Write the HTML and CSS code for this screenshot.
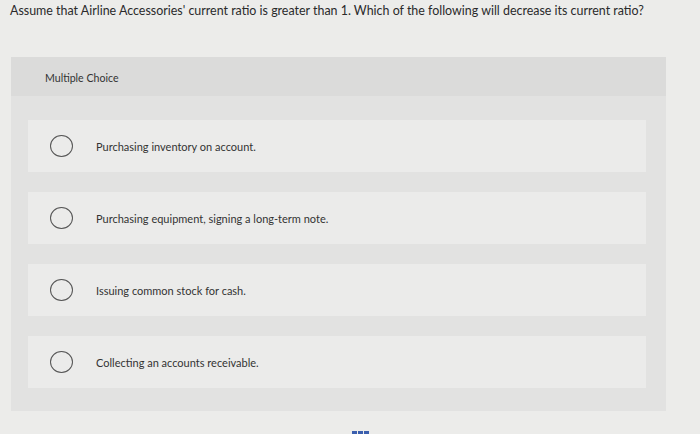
FILE: index.html
```html
<!DOCTYPE html>
<html>
<head>
<meta charset="utf-8">
<link rel="stylesheet" href="styles.css">
</head>
<body>
<div class="page">
  <p class="question">Assume that Airline Accessories' current ratio is greater than 1. Which of the following will decrease its current ratio?</p>
  <div class="panel">
    <div class="panel-head">Multiple Choice</div>
    <div class="options">
      <div class="option"><span class="radio"></span><span class="label">Purchasing inventory on account.</span></div>
      <div class="option"><span class="radio"></span><span class="label">Purchasing equipment, signing a long-term note.</span></div>
      <div class="option"><span class="radio"></span><span class="label">Issuing common stock for cash.</span></div>
      <div class="option"><span class="radio"></span><span class="label">Collecting an accounts receivable.</span></div>
    </div>
  </div>
  <div class="pager"><span></span><span></span><span></span></div>
</div>
</body>
</html>
```
FILE: styles.css
```css
html, body {
  margin: 0;
  padding: 0;
  background: #ececea;
  font-family: Lato, "Open Sans", sans-serif;
  color: #2a2a2a;
}
.page {
  width: 700px;
  height: 434px;
  overflow: hidden;
  display: flex;
  flex-direction: column;
}
.question {
  margin: 0;
  padding: 3px 0 0 10px;
  font-size: 12.45px;
  line-height: 16px;
  color: #2a2a2a;
  height: 57px;
  box-sizing: border-box;
  flex: none;
}
.panel {
  margin-left: 11px;
  width: 655px;
  background: #e2e2e1;
  padding-bottom: 23px;
  flex: none;
}
.panel-head {
  height: 39px;
  background: #dbdbda;
  display: flex;
  align-items: center;
  padding-left: 34px;
  padding-top: 3px;
  box-sizing: border-box;
  font-size: 10.6px;
  color: #333;
}
.options {
  display: flex;
  flex-direction: column;
  gap: 20px;
  padding: 24px 20px 0 17px;
}
.option {
  height: 52px;
  background: #ebebea;
  display: flex;
  align-items: center;
  padding-left: 22px;
  gap: 23px;
}
.radio {
  width: 21px;
  height: 20px;
  border: 1.3px solid #555;
  border-radius: 50%;
  flex: none;
}
.label {
  font-size: 11px;
  color: #333;
}
.pager {
  display: flex;
  gap: 1px;
  margin: 20px 0 0 352px;
  flex: none;
}
.pager span {
  width: 5px;
  height: 4px;
  background: #3b5fae;
}
```
